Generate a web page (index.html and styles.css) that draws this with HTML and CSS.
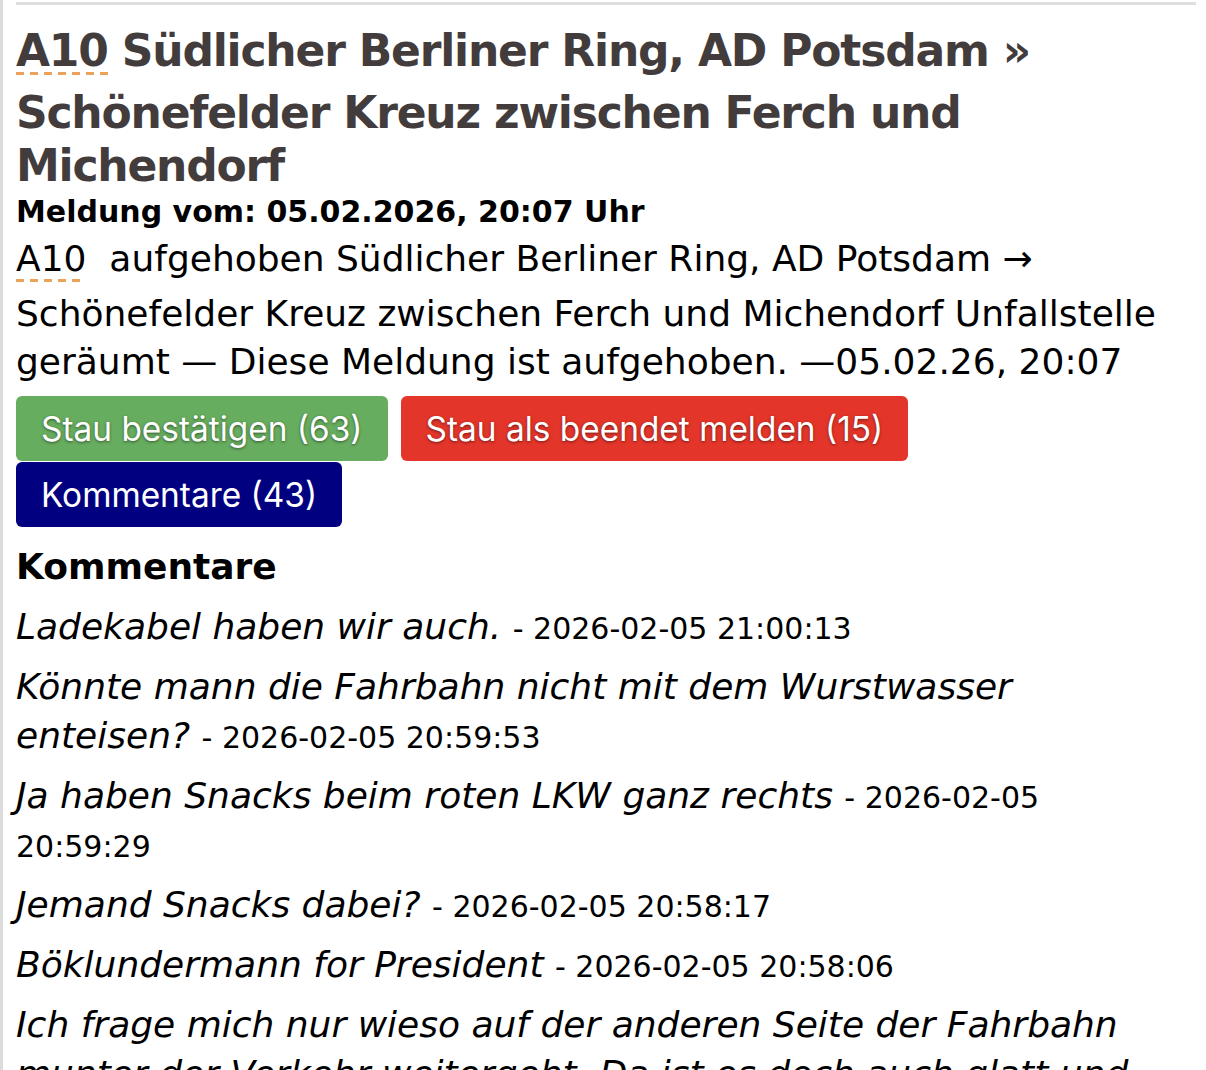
FILE: index.html
```html
<!DOCTYPE html>
<html lang="de">
<head>
    <meta charset="UTF-8">
    <meta name="viewport" content="width=device-width, initial-scale=1.0">
    <title>A10 Südlicher Berliner Ring - Stau</title>
    <link rel="stylesheet" href="styles.css">
</head>
<body>
    <div class="page">
        <div class="rule"></div>
        <div class="meldung">
            <h1><abbr class="road" title="Autobahn 10">A10</abbr> Südlicher Berliner Ring, AD Potsdam » Schönefelder Kreuz zwischen Ferch und Michendorf</h1>
            <div class="datum">Meldung vom: 05.02.2026, 20:07 Uhr</div>
            <p class="text"><abbr class="road" title="Autobahn 10">A10</abbr>&nbsp; aufgehoben Südlicher Berliner Ring, AD Potsdam → Schönefelder Kreuz zwischen Ferch und Michendorf Unfallstelle geräumt — Diese Meldung ist aufgehoben. —05.02.26, 20:07</p>
            <div class="actions">
                <button class="btn confirm">Stau bestätigen (63)</button>
                <button class="btn ended">Stau als beendet melden (15)</button>
                <button class="btn comments">Kommentare (43)</button>
            </div>
        </div>
        <div class="kommentare">
            <h2>Kommentare</h2>
            <p><em>Ladekabel haben wir auch.</em> <span class="zeit">- 2026-02-05 21:00:13</span></p>
            <p><em>Könnte mann die Fahrbahn nicht mit dem Wurstwasser enteisen?</em> <span class="zeit">- 2026-02-05 20:59:53</span></p>
            <p><em>Ja haben Snacks beim roten LKW ganz rechts</em> <span class="zeit">- 2026-02-05 20:59:29</span></p>
            <p><em>Jemand Snacks dabei?</em> <span class="zeit">- 2026-02-05 20:58:17</span></p>
            <p><em>Böklundermann for President</em> <span class="zeit">- 2026-02-05 20:58:06</span></p>
            <p><em>Ich frage mich nur wieso auf der anderen Seite der Fahrbahn munter der Verkehr weitergeht. Da ist es doch auch glatt und kalt.</em> <span class="zeit">- 2026-02-05 20:57:41</span></p>
        </div>
    </div>
</body>
</html>
```

FILE: styles.css
```css
body {
    margin: 0;
    background-color: white;
    color: black;
    font-family: "DejaVu Sans", Verdana, sans-serif;
    font-size: 36px;
    border-left: 3px solid #dcdcdc;
    min-height: 100vh;
}
.page {
    padding: 2px 10px 0 13px;
}
.rule {
    height: 3px;
    background-color: #dedede;
}
.meldung,
.kommentare {
    margin-right: 24px;
}
h1 {
    margin: 19px 0 0 0;
    font-size: 44px;
    letter-spacing: -1.2px;
    line-height: 53px;
    color: #433c3c;
}
.road {
    display: inline-block;
    text-decoration: none;
    line-height: 1;
    padding-bottom: 2px;
    margin-bottom: 11px;
    background: repeating-linear-gradient(90deg, #eba35c 0 8px, transparent 8px 14px) 0 100% / 100% 3px no-repeat;
}
.text .road {
    padding-bottom: 5px;
    margin-bottom: 8px;
}
.datum {
    font-size: 30px;
    font-weight: bold;
    line-height: 36px;
    margin-top: 2px;
}
.text {
    margin: 5px 0 0 0;
    line-height: 48px;
}
.actions {
    display: flex;
    flex-wrap: wrap;
    column-gap: 13px;
    row-gap: 1px;
    margin-top: 10px;
}
.btn {
    font-family: Inter, "Noto Sans", sans-serif;
    font-size: 33.4px;
    height: 65px;
    padding: 0 25px;
    border: none;
    border-radius: 6px;
    color: white;
    text-shadow: 0 1px 3px rgba(0, 0, 0, 0.5);
}
.confirm {
    background-color: #67ad5f;
}
.ended {
    background-color: #e4352a;
}
.comments {
    background-color: #000080;
    text-shadow: none;
}
h2 {
    font-size: 36px;
    line-height: 48px;
    margin: 16px 0 0 0;
}
.kommentare p {
    margin: 11px 0 0 0;
    line-height: 49px;
}
.zeit {
    font-size: 30px;
    line-height: 1;
}
```
